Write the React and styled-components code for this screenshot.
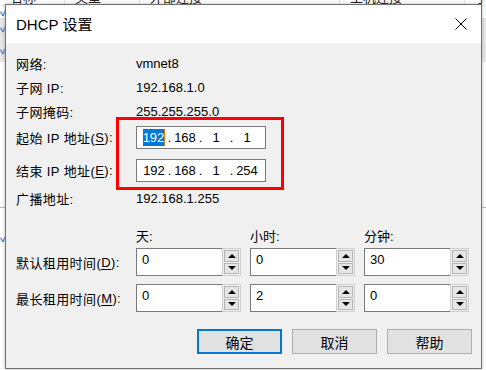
import React from 'react';
import styled, { createGlobalStyle } from 'styled-components';

const GlobalStyle = createGlobalStyle`
  html, body {
    margin: 0;
    padding: 0;
    background: #ffffff;
    overflow: hidden;
  }
  body {
    font-family: "Liberation Sans", "Noto Sans CJK SC", sans-serif;
    font-size: 13px;
    color: #000;
  }
`;

const Desktop = styled.div`
  position: relative;
  width: 486px;
  height: 370px;
  overflow: hidden;
  background: #ffffff;
`;

/* list view behind the dialog */
const ListHeader = styled.div`
  display: flex;
  height: 14px;
  margin-top: -9px;
  border-bottom: 1px solid #e5e5e5;
`;

const HeaderCell = styled.div`
  width: ${(p) => p.$w}px;
  flex: none;
  padding-left: ${(p) => p.$pad || 10}px;
  box-sizing: border-box;
  border-right: 1px solid #e5e5e5;
  font-size: 13px;
  line-height: 14px;
  color: #222;
  white-space: nowrap;
  overflow: hidden;
`;

const ListRow = styled.div`
  height: ${(p) => p.$h || 20}px;
  background: ${(p) => (p.$shade ? '#e8e8e8' : '#fff')};
  border-bottom: ${(p) => (p.$line ? '1px solid #b9b9b9' : 'none')};
  color: #2a6fd1;
  font-size: 13px;
  line-height: ${(p) => p.$h || 20}px;
`;

const Dialog = styled.div`
  position: absolute;
  left: 5px;
  top: 4px;
  width: 477px;
  height: 365px;
  box-sizing: border-box;
  border: 1px solid #707070;
  background: #f0f0f0;
  display: flex;
  flex-direction: column;
  box-shadow: 0 0 4px rgba(0, 0, 0, 0.25);
`;

const TitleBar = styled.div`
  height: 38px;
  flex: none;
  background: #ffffff;
  display: flex;
  align-items: center;
  justify-content: space-between;
  padding: 0 14px 0 10px;
`;

const Title = styled.div`
  font-size: 15px;
  color: #000;
  padding-bottom: 1px;
`;

const CloseButton = styled.div`
  width: 12px;
  height: 12px;
  display: flex;
  svg { display: block; }
`;

const Body = styled.div`
  position: relative;
  flex: 1;
  padding: 8px 9px 0 10px;
  display: flex;
  flex-direction: column;
`;

const InfoGrid = styled.div`
  display: grid;
  grid-template-columns: 120px auto;
`;

const Label = styled.div`
  height: ${(p) => p.$h}px;
  display: flex;
  align-items: center;
  letter-spacing: 0.4px;
  white-space: nowrap;
`;

const Value = styled.div`
  height: ${(p) => p.$h}px;
  display: flex;
  align-items: center;
`;

const U = styled.span`
  text-decoration: underline;
  text-underline-offset: 2px;
`;

const IpBox = styled.div`
  width: 130px;
  height: 23px;
  box-sizing: border-box;
  border: 1px solid #7a7a7a;
  background: #fff;
  display: flex;
  align-items: center;
  padding-left: 4px;
`;

const IpField = styled.div`
  width: 26px;
  display: flex;
  justify-content: center;
`;

const IpDot = styled.div`
  width: 5px;
  text-align: center;
`;

const Selected = styled.span`
  background: #0078d7;
  color: #fff;
  padding: 1px 0;
  border-right: 1px solid #e07b00;
`;

const RedFrame = styled.div`
  position: absolute;
  left: 110px;
  top: 74px;
  width: 168px;
  height: 73px;
  box-sizing: border-box;
  border: 3px solid #ff0000;
  pointer-events: none;
`;

const LeaseGrid = styled.div`
  margin-top: 17px;
  display: grid;
  grid-template-columns: 111px repeat(3, 105px);
  column-gap: 9px;
  align-items: center;
`;

const ColHead = styled.div`
  height: 20px;
  display: flex;
  align-items: center;
  margin-bottom: 3px;
`;

const SpinRowLabel = styled.div`
  height: 28px;
  display: flex;
  align-items: center;
  letter-spacing: 0.4px;
  white-space: nowrap;
  margin-top: ${(p) => p.$mt || 0}px;
`;

const Spin = styled.div`
  display: flex;
  height: 28px;
  margin-top: ${(p) => p.$mt || 0}px;
`;

const SpinInput = styled.div`
  width: 86px;
  box-sizing: border-box;
  border: 1px solid #7a7a7a;
  border-right: none;
  background: #fff;
  padding: 3px 0 0 5px;
  line-height: 16px;
`;

const SpinButtons = styled.div`
  flex: 1;
  box-sizing: border-box;
  border: 1px solid #d0d0d0;
  background: #f0f0f0;
  padding: 1px;
  display: flex;
  flex-direction: column;
  gap: 1px;
`;

const SpinBtn = styled.div`
  flex: 1;
  box-sizing: border-box;
  border: 1px solid #b5b5b5;
  background: #e6e6e6;
  display: flex;
  align-items: center;
  justify-content: center;
`;

const Arrow = styled.div`
  width: 0;
  height: 0;
  border-left: 4px solid transparent;
  border-right: 4px solid transparent;
  ${(p) => (p.$up ? 'border-bottom: 4px solid #000;' : 'border-top: 4px solid #000;')}
`;

const ButtonBar = styled.div`
  margin-top: 17px;
  display: flex;
  justify-content: flex-end;
  gap: 10px;
`;

const Button = styled.div`
  width: 85px;
  height: 25px;
  box-sizing: border-box;
  border: ${(p) => (p.$primary ? '2px solid #0078d7' : '1px solid #adadad')};
  background: #e1e1e1;
  display: flex;
  align-items: center;
  justify-content: center;
  font-size: 14px;
`;

const Spinner = ({ value, mt }) => (
  <Spin $mt={mt}>
    <SpinInput>{value}</SpinInput>
    <SpinButtons>
      <SpinBtn><Arrow $up /></SpinBtn>
      <SpinBtn><Arrow /></SpinBtn>
    </SpinButtons>
  </Spin>
);

const IpAddress = ({ parts, select }) => (
  <IpBox>
    {parts.map((p, i) => (
      <React.Fragment key={i}>
        {i > 0 && <IpDot>.</IpDot>}
        <IpField>{select && i === 0 ? <Selected>{p}</Selected> : p}</IpField>
      </React.Fragment>
    ))}
  </IpBox>
);

export default function App() {
  return (
    <Desktop>
      <GlobalStyle />
      <ListHeader>
        <HeaderCell $w={65} $pad={0}>名称</HeaderCell>
        <HeaderCell $w={75}>类型</HeaderCell>
        <HeaderCell $w={200}>外部连接</HeaderCell>
        <HeaderCell $w={125}>主机连接</HeaderCell>
        <HeaderCell $w={40}>子</HeaderCell>
      </ListHeader>
      <ListRow $h={12}>✓</ListRow>
      <ListRow $h={20} $shade>✓</ListRow>
      <ListRow $h={24} $shade>✓</ListRow>
      <ListRow $h={145} $line />
      <ListRow $h={60}>✓</ListRow>

      <Dialog>
        <TitleBar>
          <Title>DHCP 设置</Title>
          <CloseButton>
            <svg width="12" height="12" viewBox="0 0 12 12">
              <path d="M0.5 0.5 L11.5 11.5 M11.5 0.5 L0.5 11.5" stroke="#000" strokeWidth="1" fill="none" />
            </svg>
          </CloseButton>
        </TitleBar>
        <Body>
          <InfoGrid>
            <Label $h={24}>网络:</Label>
            <Value $h={24}>vmnet8</Value>
            <Label $h={24}>子网 IP:</Label>
            <Value $h={24}>192.168.1.0</Value>
            <Label $h={24}>子网掩码:</Label>
            <Value $h={24}>255.255.255.0</Value>
            <Label $h={29}>起始 IP 地址(<U>S</U>):</Label>
            <Value $h={29}><IpAddress parts={['192', '168', '1', '1']} select /></Value>
            <Label $h={36}>结束 IP 地址(<U>E</U>):</Label>
            <Value $h={36}><IpAddress parts={['192', '168', '1', '254']} /></Value>
            <Label $h={20}>广播地址:</Label>
            <Value $h={20}>192.168.1.255</Value>
          </InfoGrid>
          <RedFrame />

          <LeaseGrid>
            <div />
            <ColHead>天:</ColHead>
            <ColHead>小时:</ColHead>
            <ColHead>分钟:</ColHead>

            <SpinRowLabel>默认租用时间(<U>D</U>):</SpinRowLabel>
            <Spinner value="0" />
            <Spinner value="0" />
            <Spinner value="30" />

            <SpinRowLabel $mt={8}>最长租用时间(<U>M</U>):</SpinRowLabel>
            <Spinner value="0" mt={8} />
            <Spinner value="2" mt={8} />
            <Spinner value="0" mt={8} />
          </LeaseGrid>

          <ButtonBar>
            <Button $primary>确定</Button>
            <Button>取消</Button>
            <Button>帮助</Button>
          </ButtonBar>
        </Body>
      </Dialog>
    </Desktop>
  );
}
